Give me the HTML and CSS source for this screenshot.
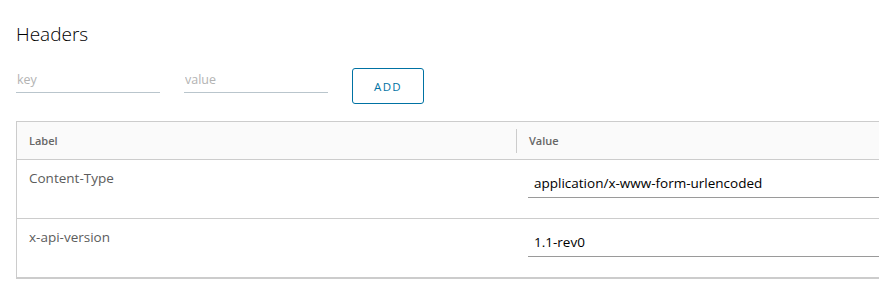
FILE: index.html
```html
<!DOCTYPE html>
<html lang="en">
<head>
    <meta charset="UTF-8">
    <title>Headers</title>
    <link rel="stylesheet" href="styles.css">
</head>
<body>
    <div class="headers-panel">
        <h3>Headers</h3>

        <form class="add-row">
            <input type="text" class="line-input" placeholder="key">
            <input type="text" class="line-input" placeholder="value">
            <button type="button" class="btn-outline">Add</button>
        </form>

        <div class="datagrid">
            <div class="dg-row dg-head">
                <div class="dg-cell">Label</div>
                <div class="dg-cell dg-sep">Value</div>
            </div>
            <div class="dg-row">
                <div class="dg-cell">Content-Type</div>
                <div class="dg-cell"><input type="text" class="cell-input" value="application/x-www-form-urlencoded"></div>
            </div>
            <div class="dg-row dg-last">
                <div class="dg-cell">x-api-version</div>
                <div class="dg-cell"><input type="text" class="cell-input" value="1.1-rev0"></div>
            </div>
        </div>
    </div>
</body>
</html>
```

FILE: styles.css
```css
* {
    box-sizing: border-box;
}

body {
    margin: 0;
    font-family: "Open Sans", Lato, sans-serif;
    color: #5c5c5c;
    background: #fff;
    overflow: hidden;
}

.headers-panel {
    padding: 0 0 0 16px;
    width: 916px;
}

h3 {
    margin: 0;
    padding-top: 22px;
    font-size: 19px;
    font-weight: 300;
    color: #000;
    line-height: 24px;
}

.add-row {
    display: flex;
    align-items: center;
    gap: 24px;
    margin-top: 22px;
}

.line-input {
    width: 144px;
    border: none;
    border-bottom: 1px solid #b9c5cc;
    padding: 0 0 4px 1px;
    font: inherit;
    font-size: 12.5px;
    color: #000;
    outline: none;
    margin-top: -8px;
}

.line-input::placeholder {
    color: #b3b3b3;
}

.btn-outline {
    width: 72px;
    height: 36px;
    border: 1px solid #0072a3;
    border-radius: 3px;
    background: #fff;
    color: #0072a3;
    font: inherit;
    font-size: 11.5px;
    letter-spacing: 1.3px;
    text-transform: uppercase;
    padding: 0;
}

.datagrid {
    margin-top: 17px;
    border: 1px solid #ccc;
    border-right: none;
    border-bottom: 2px solid #ccc;
}

.dg-row {
    display: grid;
    grid-template-columns: 499px 1fr;
    height: 59px;
    border-top: 1px solid #ccc;
}

.dg-row.dg-head {
    border-top: none;
    height: 37px;
    background: #fafafa;
    align-items: center;
    color: #666;
}

.dg-cell {
    padding: 9px 12px 0;
    font-size: 13.5px;
}

.dg-head .dg-cell {
    padding-top: 0;
    font-size: 11px;
    font-weight: 600;
}

.dg-head .dg-sep {
    border-left: 1px solid #ccc;
    height: 24px;
    line-height: 24px;
}

.cell-input {
    width: 360px;
    border: none;
    border-bottom: 1px solid #9a9a9a;
    padding: 5px 0 5px 6px;
    font: inherit;
    font-size: 13.5px;
    color: #000;
    outline: none;
}
```
